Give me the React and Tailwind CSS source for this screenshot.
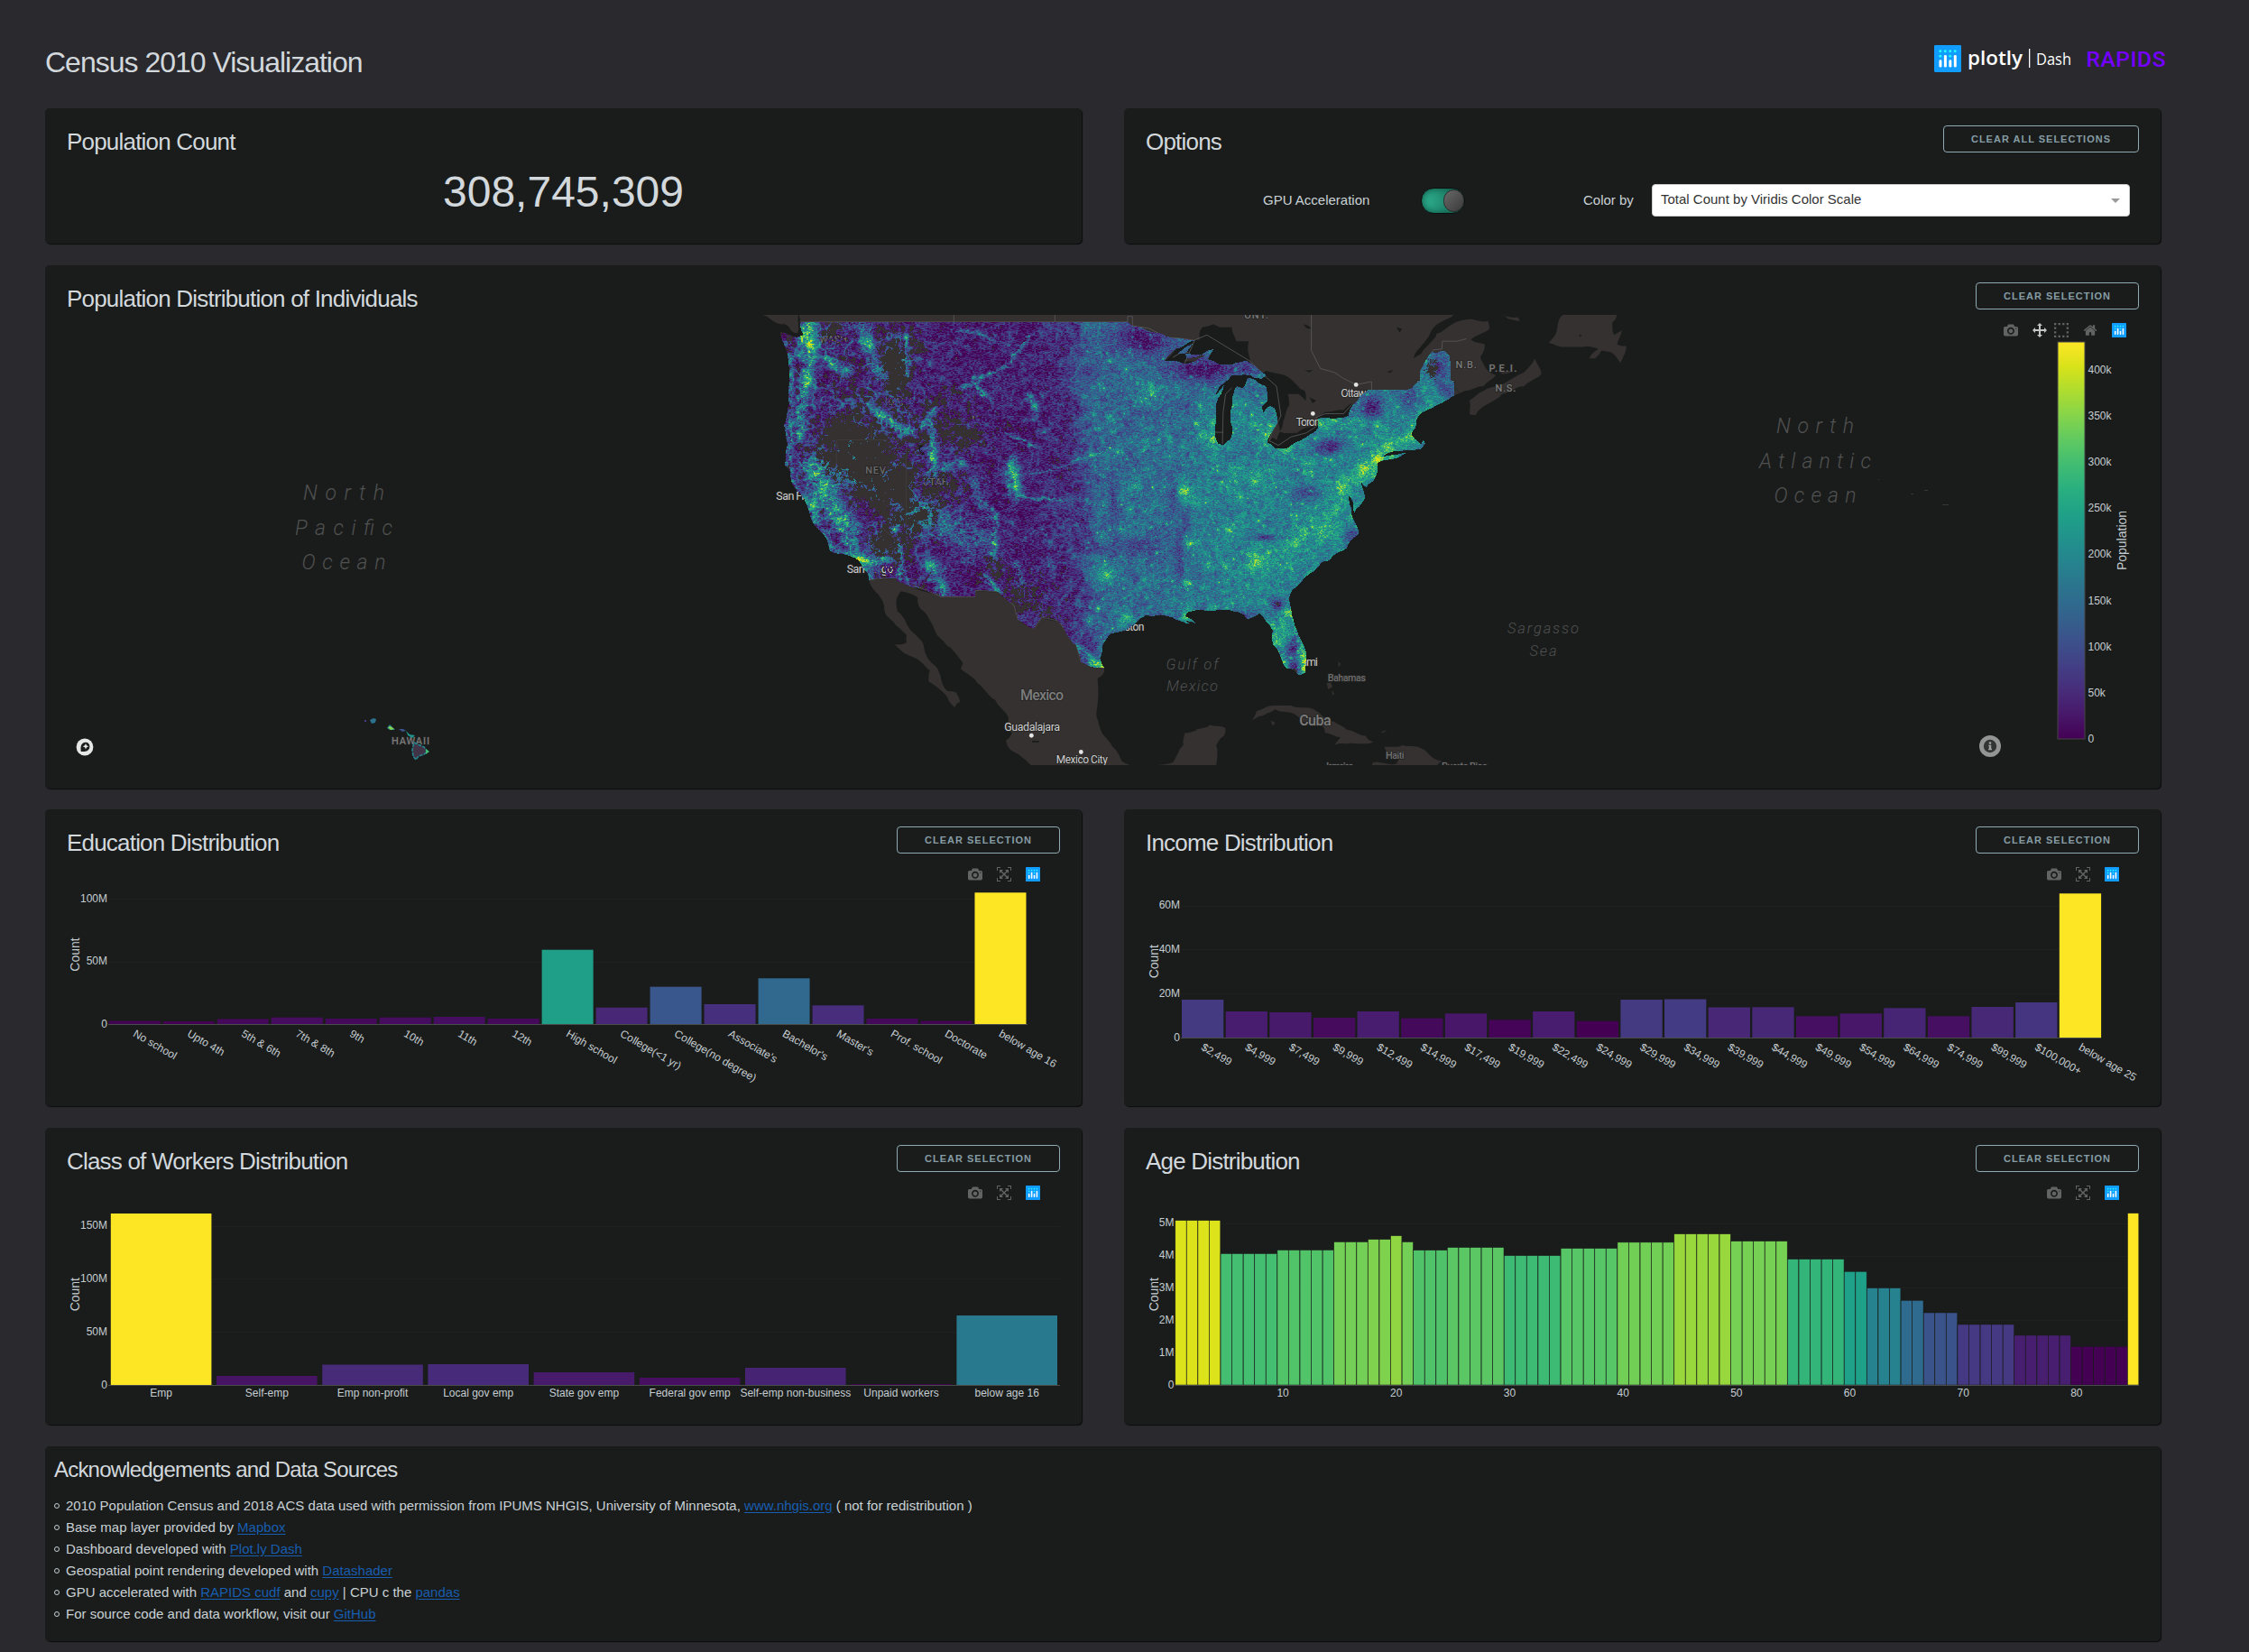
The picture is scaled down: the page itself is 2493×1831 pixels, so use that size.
import React, { useEffect, useRef } from "react";

const FONT = "'Liberation Sans', Arial, sans-serif";

/* ---------- colour scale ---------- */
const VIRIDIS = [
  [68, 1, 84], [72, 24, 106], [71, 45, 123], [66, 64, 134], [59, 82, 139], [51, 99, 141],
  [44, 114, 142], [38, 130, 142], [33, 145, 140], [31, 160, 136], [40, 174, 128], [63, 188, 115],
  [94, 201, 98], [132, 212, 75], [173, 220, 48], [216, 226, 25], [253, 231, 37],
];
function viridis(t) {
  const v = Math.max(0, Math.min(1, t)) * 16;
  const i = Math.min(15, Math.floor(v));
  const f = v - i;
  return [0, 1, 2].map((k) => Math.round(VIRIDIS[i][k] * (1 - f) + VIRIDIS[i + 1][k] * f));
}
const rgb = (c) => `rgb(${c[0]},${c[1]},${c[2]})`;

/* ---------- icons ---------- */
const CAMERA =
  "m500 450c-83 0-150-67-150-150 0-83 67-150 150-150 83 0 150 67 150 150 0 83-67 150-150 150z m400 150h-120c-16 0-34 13-39 29l-31 93c-6 15-23 28-40 28h-340c-16 0-34-13-39-28l-31-94c-6-15-23-28-40-28h-120c-55 0-100-45-100-100v-450c0-55 45-100 100-100h800c55 0 100 45 100 100v450c0 55-45 100-100 100z m-400-550c-138 0-250 112-250 250 0 138 112 250 250 250 138 0 250-112 250-250 0-138-112-250-250-250z m365 380c-19 0-35 16-35 35 0 19 16 35 35 35 19 0 35-16 35-35 0-19-16-35-35-35z";
const PAN =
  "m1000 350l-187 188 0-125-250 0 0 250 125 0-188 187-187-187 125 0 0-250-250 0 0 125-188-188 186-187 0 125 252 0 0-250-125 0 187-188 188 188-125 0 0 250 250 0 0-126 187 188z";
const SELECT =
  "m0 850l0-143 143 0 0 143-143 0z m286 0l0-143 143 0 0 143-143 0z m285 0l0-143 143 0 0 143-143 0z m286 0l0-143 143 0 0 143-143 0z m-857-286l0-143 143 0 0 143-143 0z m857 0l0-143 143 0 0 143-143 0z m-857-285l0-143 143 0 0 143-143 0z m857 0l0-143 143 0 0 143-143 0z m-857-286l0-143 143 0 0 143-143 0z m286 0l0-143 143 0 0 143-143 0z m285 0l0-143 143 0 0 143-143 0z m286 0l0-143 143 0 0 143-143 0z";
const AUTOSCALE =
  "m250 850l-187 0-63 0 0-62 0-188 63 0 0 188 187 0 0 62z m688 0l-188 0 0-62 188 0 0-188 62 0 0 188 0 62-62 0z m-875-938l0 188-63 0 0-188 0-62 63 0 187 0 0 62-187 0z m875 188l0-188-188 0 0-62 188 0 62 0 0 62 0 188-62 0z m-125 188l-1 0-93-94-156 156 156 156 92-93 2 0 0 250-250 0 0-2 93-92-156-156-156 156 94 92 0 2-250 0 0-250 0 0 93 93 157-156-157-156-93 94 0 0 0-250 250 0 0 0-94 93 156 157 156-157-93-93 0 0 250 0 0 250z";
const HOME =
  "m786 296v-267q0-15-11-26t-25-10h-214v214h-143v-214h-214q-15 0-25 10t-11 26v267q0 1 0 2t0 2l321 264 321-264q1-1 1-4z m124 39l-34-41q-5-5-12-6h-2q-7 0-12 3l-386 322-386-322q-7-4-13-4-7 2-12 7l-35 41q-4 5-3 13t6 12l401 334q18 15 42 15t43-15l136-114v109q0 8 5 13t13 5h107q8 0 13-5t5-13v-227l122-102q5-5 6-12t-4-13z";

function BarIcon({ d, className = "text-[#626463]", box = "0 0 1000 1000" }) {
  return (
    <svg viewBox={box} className={`h-4 w-4 ${className}`}>
      <path d={d} transform="matrix(1 0 0 -1 0 850)" fill="currentColor" />
    </svg>
  );
}

function PlotlyMark({ className }) {
  return (
    <svg viewBox="0 0 132 132" className={className}>
      <rect width="132" height="132" rx="5" fill="#119dff" />
      {[[30, 30], [30, 54], [54, 30], [78, 30], [78, 54], [102, 30]].map(([x, y]) => (
        <circle key={`${x}${y}`} cx={x} cy={y} r="6.5" fill="#25fefd" />
      ))}
      {[[24, 72], [48, 48], [72, 72], [96, 48]].map(([x, y]) => (
        <rect key={x} x={x} y={y} width="13" height={108 - y} rx="6" fill="#fff" />
      ))}
    </svg>
  );
}

/* ---------- shared pieces ---------- */
function Card({ className = "", children }) {
  return (
    <section className={`rounded-[5px] bg-[#1a1c1b] shadow-[1px_1px_1px_#0b0c0c] ${className}`}>{children}</section>
  );
}

function OutlineButton({ children }) {
  return (
    <button className="h-[30px] rounded-[4px] border border-[#8faab3] px-[30px] text-[11px] leading-[27px] font-bold tracking-[1px] whitespace-nowrap text-[#869ca5] uppercase">
      {children}
    </button>
  );
}

function CardHeader({ title, button }) {
  return (
    <header className="flex h-[56px] items-start justify-between pt-[19px] pr-6 pl-6">
      <h2 className="pt-[3px] text-[26px] leading-[30px] tracking-[-0.8px] text-[#d2d8dc]">{title}</h2>
      {button && <OutlineButton>{button}</OutlineButton>}
    </header>
  );
}

/* ---------- bar charts ---------- */
function BarChart({ bars, x0, pitch, barW, base, axis, ticks, unit, countX, countY, rotate, xTicks, tickX, edge }) {
  const tops = bars.map((b) => b[1]);
  const hi = Math.max(...tops);
  const lo = Math.min(...tops);
  return (
    <svg viewBox="0 84 1149 245" className="block h-[245px] w-[1149px]" fontFamily={FONT} fill="#c5cdd2">
      {ticks.map((t, i) => (
        <g key={t}>
          {i > 0 && <rect x={axis[0]} y={Math.round(base - i * unit)} width={axis[1] - axis[0]} height="1" fill="#1f2120" />}
          <text x={tickX} y={base - i * unit + 3.6} fontSize="12" textAnchor="end">{t}</text>
        </g>
      ))}
      {bars.map(([label, h], i) => (
        <g key={i}>
          <rect
            x={x0 + i * pitch}
            y={base - h}
            width={barW}
            height={h}
            fill={rgb(viridis((h - lo) / (hi - lo)))}
            stroke={edge ? "#1a1c1b" : "none"}
            strokeWidth={edge ? 0.5 : 0}
          />
          {label && (rotate ? (
            <text
              fontSize="12"
              transform={`translate(${x0 + i * pitch + barW / 2 - 2.5} ${base + 13}) rotate(30)`}
            >
              {label}
            </text>
          ) : (
            <text x={x0 + i * pitch + barW / 2} y={base + 12.6} fontSize="12" textAnchor="middle">{label}</text>
          ))}
        </g>
      ))}
      {xTicks && xTicks.map(([t, x]) => (
        <text key={t} x={x} y={base + 12.6} fontSize="12" textAnchor="middle">{t}</text>
      ))}
      <rect x={axis[0]} y={base} width={axis[1] - axis[0]} height="1" fill="#4a4c4b" />
      <text fontSize="14" textAnchor="middle" transform={`translate(${countX} ${countY}) rotate(-90)`}>Count</text>
    </svg>
  );
}

function ChartCard({ title, chart }) {
  return (
    <Card className="h-[329px] w-[1149px]">
      <CardHeader title={title} button="Clear Selection" />
      <div className="flex h-7 items-center justify-end gap-4 pt-[3px] pr-[46px]">
        <BarIcon d={CAMERA} />
        <BarIcon d={AUTOSCALE} />
        <PlotlyMark className="h-4 w-4" />
      </div>
      <BarChart {...chart} />
    </Card>
  );
}

const EDUCATION = {
  bars: [
    ["No school", 3.5], ["Upto 4th", 3], ["5th & 6th", 5.6], ["7th & 8th", 7.3], ["9th", 6], ["10th", 7.3],
    ["11th", 8], ["12th", 6], ["High school", 82.3], ["College(<1 yr)", 18.3], ["College(no degree)", 41.3],
    ["Associate's", 22], ["Bachelor's", 50.7], ["Master's", 20.7], ["Prof. school", 6], ["Doctorate", 3.5],
    ["below age 16", 145.7],
  ],
  x0: 70.8, pitch: 59.98, barW: 57, base: 238, axis: [70, 1089], ticks: ["0", "50M", "100M"], unit: 69.5,
  tickX: 69, countX: 38, countY: 161, rotate: true,
};

const INCOME = {
  bars: [
    ["$2,499", 42], ["$4,999", 29], ["$7,499", 28], ["$9,999", 22], ["$12,499", 29], ["$14,999", 21.4],
    ["$17,499", 26.7], ["$19,999", 19.6], ["$22,499", 29], ["$24,999", 18.3], ["$29,999", 42], ["$34,999", 42.5],
    ["$39,999", 33.5], ["$44,999", 33.7], ["$49,999", 23.7], ["$54,999", 26.7], ["$64,999", 32.7],
    ["$74,999", 23.7], ["$99,999", 34], ["$100,000+", 39], ["below age 25", 159.7],
  ],
  x0: 64, pitch: 48.64, barW: 46.3, base: 253, axis: [63, 1083], ticks: ["0", "20M", "40M", "60M"], unit: 48.8,
  tickX: 62, countX: 38, countY: 168.7, rotate: true,
};

const WORKERS = {
  bars: [
    ["Emp", 190], ["Self-emp", 10], ["Emp non-profit", 22.5], ["Local gov emp", 23], ["State gov emp", 14],
    ["Federal gov emp", 8], ["Self-emp non-business", 19], ["Unpaid workers", 0.8], ["below age 16", 77],
  ],
  x0: 72.8, pitch: 117.2, barW: 111.6, base: 285, axis: [70, 1125], ticks: ["0", "50M", "100M", "150M"],
  unit: 58.8, tickX: 69, countX: 38, countY: 184.7,
};

const AGE_GROUPS = [
  [4, 182.3], [5, 145.5], [5, 149.5], [3, 158.5], [2, 161.3], [1, 165.3], [1, 158.5], [3, 149.3], [5, 152.3], [5, 143.3],
  [5, 151.3], [5, 158.1], [5, 167.3], [5, 159.3], [5, 139.4], [2, 125.7], [3, 107.4], [2, 93.7], [3, 80],
  [5, 67], [5, 55], [5, 42.6], [1, 190.3],
];
const AGE = {
  bars: AGE_GROUPS.flatMap(([n, h]) => Array.from({ length: n }, () => ["", h])),
  x0: 56.8, pitch: 12.568, barW: 12.3, base: 285, axis: [57, 1125],
  ticks: ["0", "1M", "2M", "3M", "4M", "5M"], unit: 35.87, tickX: 55.5, countX: 38, countY: 184.7, edge: true,
  xTicks: [10, 20, 30, 40, 50, 60, 70, 80].map((t) => [t, 176.1 + (t - 10) * 12.568]),
};

/* ---------- map geometry ----------
   Coast lines are kept in two survey grids: "w" for the west, "e" for the east. */
const wx = (x) => 746 + x / 3;
const ex = (x) => 1226 + x * 0.3444;
const gy = (y) => y * 0.3444 - 19;
function pts(src) {
  let mode = "w";
  const out = [];
  src.trim().split(/\s+/).forEach((tok) => {
    if (tok === "w" || tok === "e") mode = tok;
    else {
      const [x, y] = tok.split(",").map(Number);
      out.push([mode === "w" ? wx(x) : ex(x), gy(y)]);
    }
  });
  return out;
}
/* Adds small deterministic wiggles so that shores look natural. */
function rough(list, amp = 1.3) {
  const out = [];
  list.forEach((p, i) => {
    const q = list[(i + 1) % list.length];
    const d = Math.hypot(q[0] - p[0], q[1] - p[1]);
    out.push(p);
    if (p[1] === q[1] || d > 150) return;
    const n = Math.floor(d / 4);
    for (let k = 1; k < n; k++) {
      const t = k / n;
      const s = Math.sin(i * 91.7 + k * 37.3) * amp;
      out.push([p[0] + (q[0] - p[0]) * t + (s * (q[1] - p[1])) / d, p[1] + (q[1] - p[1]) * t - (s * (q[0] - p[0])) / d]);
    }
  });
  return out;
}
const toPath = (list) => "M" + list.map((p) => `${p[0].toFixed(1)},${p[1].toFixed(1)}`).join("L") + "Z";
const shape = (src, amp) => toPath(rough(pts(src), amp));
const line = (src) => "M" + pts(src).map((p) => `${p[0].toFixed(1)},${p[1].toFixed(1)}`).join("L");

const USA = `200,78 1290,78 1310,92 1340,98 1380,112 1420,125 1460,130 1500,137 1520,138 1490,145 1450,165 1412,205
 1440,203 1480,212 1515,203 1548,188 e 15,180 60,150 75,138 40,180 45,195 90,185 118,168 132,166 112,198 150,215 190,215 240,205 268,222
 300,250 285,262 262,258 250,248 215,250 190,248 165,275 150,285 130,318 150,300 165,280 155,310 138,350 135,440 146,470 165,474 185,455
 193,420 185,370 192,320 205,285 225,292 240,260 265,265 300,285 306,330 286,352 292,370 312,348 328,356 338,400 318,435
 303,465 330,485 368,485 410,460 468,420 466,390 530,388 565,380 580,345 605,315 628,298 750,298 770,290 795,268 797,235
 815,200 835,175 850,178 875,170 892,188 893,262 905,272 905,290 922,308 890,325 850,345 800,372 783,395 780,420 768,440
 780,455 800,472 806,458 812,470 798,486 760,490 700,497 670,515 740,500 752,498 710,518 660,530 658,560 645,590 622,610
 604,588 612,615 620,640 600,672 584,692 582,660 566,635 565,600 567,650 576,680 576,700 588,725 600,755 575,780 560,805
 530,820 505,845 480,850 455,880 420,905 385,940 375,975 382,1020 400,1070 425,1130 430,1160 428,1205 408,1215 385,1195
 365,1192 345,1150 322,1115 322,1070 300,1040 280,1015 240,1035 215,1012 180,1003 130,1008 80,1003 50,1010 40,1025
 75,1048 40,1040 w 1500,1050 1450,1035 1400,1020 1350,1022 1320,1045 1280,1070 1235,1080 1205,1120 1198,1160 1212,1192
 1170,1188 1135,1172 1120,1120 1085,1080 1060,1040 1040,1030 1005,1028 978,1065 925,1035 912,990 860,945 782,942
 782,962 670,962 523,910 520,902 430,908 425,885 395,845 345,825 300,815 285,770 245,725 220,660 175,600 170,560
 150,540 160,470 147,410 165,340 165,250 155,170 135,110 190,128 212,120`;

const CANADA = `197,55 1500,55 e 905,55 860,80 830,110 780,180 775,195 800,180 850,115 900,85 960,68 1015,75 1020,100 960,135
 1005,150 990,190 1020,240 1040,250 1000,285 940,300 922,308 905,290 893,262 750,298 628,300 580,345 540,372 470,386 468,425
 330,485 303,465 338,400 300,250 110,205 w 1412,205 1290,78 215,78 200,100`;

const LAND = [
  "75,55 195,55 192,115 170,105 150,85 110,75",
  `430,908 520,900 523,910 670,962 782,962 782,942 860,945 912,990 925,1035 978,1065 1005,1028 1060,1040 1120,1120
  1135,1172 1212,1192 1205,1215 1190,1225 1187,1350 1200,1390 1240,1445 1270,1490 1310,1505 970,1505 940,1480 900,1455
  885,1425 905,1400 888,1385 893,1350 850,1295 790,1240 735,1195 742,1175 690,1120 665,1095 630,1035 600,1000 592,965
  560,950 535,945 523,965 525,1010 555,1050 580,1080 605,1105 620,1150 650,1185 670,1230 690,1265 720,1270 733,1300
  715,1318 690,1285 628,1235 632,1200 600,1170 560,1150 515,1115 555,1110 555,1085 520,1055 490,1025 480,990 450,945`,
  "1350,1505 1440,1495 1475,1440 1480,1400 1540,1385 e 70,1390 120,1375 170,1385 165,1410 140,1440 140,1505",
  "e 255,1360 270,1330 320,1312 380,1312 440,1320 480,1345 520,1365 560,1390 620,1410 645,1430 560,1435 520,1440 540,1415 490,1400 480,1375 420,1365 380,1335 330,1325 290,1345",
  "e 680,1445 740,1440 800,1450 830,1475 865,1490 850,1505 640,1505 645,1495 720,1500 730,1480 690,1475",
  "e 1210,145 1235,110 1240,80 1255,55 1430,55 1415,80 1420,120 1445,105 1430,150 1460,155 1440,210 1410,175 1380,170 1360,195 1340,195 1370,165 1320,158 1250,158",
  "e 955,375 955,330 1000,300 1050,280 1110,250 1130,240 1165,195 1187,245 1130,285 1060,310 1000,350 975,378",
  "e 1050,55 1110,62 1118,74 1080,68", "e 1020,225 1060,235 1095,238 1060,245",
  "e 495,1240 508,1238 515,1252 500,1260", "e 512,1262 520,1275 514,1280", "e 315,1360 330,1368 322,1378",
  "e 670,1398 690,1390 678,1400", "e 532,1170 540,1178 534,1190",
];
const WATER = [
  `1412,205 1450,165 1500,138 1530,135 e 85,120 95,95 130,85 150,95 190,95 205,140 245,140 242,170 250,215 268,222 240,205
  190,215 150,215 112,198 132,166 90,185 45,195 30,215`,
  "e 262,258 300,235 370,255 400,282 425,300 428,332 405,310 370,310 375,345 355,400 345,430 338,400 328,356 292,370 306,330 300,285",
  "e 150,285 190,245 245,250 240,262 205,285 190,320 185,370 193,420 185,455 165,474 146,470 135,440 138,350",
  "e 303,468 322,450 335,458 345,432 400,435 430,418 470,408 465,430 410,460 365,485 330,485",
  "e 462,385 490,368 550,362 575,340 578,372 530,388 475,390",
  "592,475 610,475 630,505 632,520 612,515",
  "e 420,85 435,90 450,100 430,98", "e 720,95 738,100 730,112", "e 425,233 450,232 440,240", "e 690,238 710,232 700,242",
  "e 440,320 462,330 450,340", "e 1308,118 1316,122 1310,128", "972,1426 995,1426 995,1431 972,1431",
];
const BORDERS = [
  "200,78 1290,78", "712,55 712,78", "1048,55 1048,78", "1290,78 1290,60 1306,60 1306,90 1360,98 1420,128 1460,130 1510,137 e 110,120 250,205 300,255 334,285 348,380 320,435 310,460 340,475 380,448 430,435 465,412 462,385 490,373 550,373 575,345",
  "e 446,55 446,170 475,228 520,240 550,260 590,280 640,270 640,298", "e 797,262 797,235 838,168 866,165 868,140 915,140 945,132",
  "e 38,212 70,138", "e 0,192 28,176 50,176", "e 190,290 170,310 162,370 160,470", "e 135,433 163,433",
  "430,908 520,900 670,962 782,962 782,942 860,945 912,990 925,1035 978,1065 1005,1028 1060,1040 1120,1120 1135,1172 1212,1192",
  "322,457 550,457", "322,457 322,605 530,790", "553,457 553,740", "438,370 438,457", "748,510 748,640",
];

/* x, y, peak, radius */
const CITIES_W = [
  [232, 150, 0.6, 20], [228, 95, 0.4, 16], [218, 272, 0.55, 16], [430, 150, 0.4, 14], [455, 370, 0.35, 12], [240, 665, 0.55, 20],
  [270, 620, 0.42, 16], [330, 715, 0.4, 14], [400, 842, 0.7, 26], [432, 895, 0.5, 14], [512, 742, 0.75, 9],
  [636, 862, 0.7, 16], [678, 925, 0.45, 12], [640, 520, 0.6, 11], [908, 565, 0.6, 18], [915, 610, 0.4, 12],
  [850, 790, 0.5, 9], [850, 940, 0.5, 9], [1365, 300, 0.44, 22], [1257, 495, 0.36, 10], [1312, 603, 0.38, 16], [1480, 622, 0.38, 18],
  [1220, 890, 0.46, 20], [1280, 1028, 0.46, 19], [1160, 1040, 0.4, 13], [1190, 1000, 0.35, 11], [1200, 772, 0.36, 11],
  [1262, 742, 0.32, 10], [1207, 668, 0.3, 9], [1495, 790, 0.36, 12], [1488, 1022, 0.38, 12], [1180, 1182, 0.42, 14],
  [1030, 860, 0.32, 10], [1030, 785, 0.28, 9], [1350, 475, 0.32, 9], [550, 425, 0.3, 12], [975, 350, 0.35, 8],
  [1072, 200, 0.36, 8], [545, 120, 0.38, 9], [1485, 915, 0.25, 10], [330, 580, 0.38, 10], [198, 435, 0.35, 10], [1530, 440, 0.26, 9],
  [1430, 460, 0.26, 7], [1510, 520, 0.26, 8], [1228, 200, 0.34, 7], [300, 215, 0.35, 11], [350, 230, 0.3, 9], [632, 210, 0.3, 7], [668, 262, 0.3, 7],
  [1470, 480, 0.24, 7], [1243, 432, 0.24, 6], [1230, 378, 0.24, 6], [1052, 122, 0.26, 6], [1345, 910, 0.24, 8], [1365, 692, 0.24, 8], [1515, 400, 0.26, 9],
];
const CITIES_E = [
  [130, 455, 0.46, 20], [128, 405, 0.3, 10], [310, 435, 0.42, 16], [365, 490, 0.36, 14], [430, 535, 0.34, 12],
  [658, 520, 0.5, 14], [612, 555, 0.34, 18], [540, 608, 0.4, 14], [768, 438, 0.38, 15], [690, 480, 0.26, 13], [262, 590, 0.34, 14], [270, 570, 0.26, 10],
  [197, 565, 0.34, 13], [215, 642, 0.32, 10], [38, 622, 0.36, 15], [265, 848, 0.4, 20], [398, 785, 0.3, 15],
  [175, 742, 0.34, 12], [55, 790, 0.34, 11], [475, 755, 0.28, 13], [422, 745, 0.26, 11], [525, 678, 0.32, 11], [572, 708, 0.34, 10],
  [365, 1008, 0.34, 11], [378, 1080, 0.34, 13], [330, 1108, 0.4, 11], [422, 1170, 0.6, 12], [420, 1195, 0.5, 10],
  [435, 890, 0.3, 9], [320, 555, 0.28, 10], [520, 395, 0.3, 9], [474, 405, 0.34, 9], [600, 395, 0.26, 9], [172, 865, 0.3, 10],
  [40, 915, 0.26, 9], [45, 1022, 0.4, 10], [125, 998, 0.26, 8], [260, 410, 0.28, 8], [72, 400, 0.26, 8], [660, 410, 0.26, 9], [362, 1185, 0.3, 9],
];
const CITIES = [
  ...CITIES_W.map(([x, y, a, r]) => [wx(x), gy(y), a, r / 3]),
  ...CITIES_E.map(([x, y, a, r]) => [ex(x), gy(y), a, r / 3]),
];
/* thinly settled ground: x, y, rx, ry, strength */
const EMPTY = [
  ...[[400, 520, 110, 110, 1], [500, 600, 90, 90, 0.8], [510, 220, 45, 80, 0.9], [720, 440, 110, 70, 0.75], [350, 420, 70, 50, 0.7],
    [600, 700, 100, 70, 0.7], [480, 790, 50, 60, 0.8], [850, 860, 40, 50, 0.7], [930, 960, 70, 60, 0.7], [480, 400, 60, 80, 0.5],
    [580, 150, 30, 50, 0.7], [400, 350, 60, 40, 0.5], [690, 600, 90, 60, 0.6], [700, 310, 60, 40, 0.5],
    [1000, 1010, 50, 40, 0.6], [600, 960, 80, 20, 0.5], [740, 330, 60, 50, 0.4], [290, 110, 40, 30, 0.3],
    [1340, 110, 60, 22, 1.2]].map(([x, y, a, b, s]) => [wx(x), gy(y), a / 3, b / 3, s]),
  ...[[832, 225, 32, 48, 1.9], [640, 355, 22, 26, 1.3], [390, 1200, 18, 16, 1.8], [335, 985, 14, 12, 1.5]].map(([x, y, a, b, s]) => [ex(x), gy(y), a / 3, b / 3, s]),
];
const LOW = [
  ...[[1340, 130, 90, 45, 0.28], [1320, 800, 90, 28, 0.12], [1240, 650, 14, 70, 0.15], [1460, 840, 16, 120, 0.14], [1140, 1110, 40, 50, 0.2], [1130, 1150, 30, 40, 0.2], [1480, 340, 30, 20, 0.12],
    [1540, 230, 70, 50, 0.12]].map(([x, y, a, b, s]) => [wx(x), gy(y), a / 3, b / 3, s]),
  ...[[640, 350, 36, 42, 0.35], [505, 480, 50, 26, 0.26], [430, 625, 42, 26, 0.2], [100, 225, 120, 40, 0.2], [270, 310, 40, 40, 0.12],
    [385, 1120, 22, 46, 0.3], [760, 320, 30, 36, 0.24], [230, 1025, 40, 22, 0.2], [335, 985, 22, 18, 0.3], [855, 220, 34, 60, 0.25],
    [290, 770, 40, 10, 0.25], [575, 765, 22, 20, 0.3], [395, 1190, 22, 18, 0.3], [885, 300, 25, 20, 0.25], [230, 230, 60, 25, 0.2], [0, 640, 15, 60, 0.15], [40, 740, 15, 50, 0.12]].map(([x, y, a, b, s]) => [ex(x), gy(y), a / 3, b / 3, s]),
];
/* settled corridors: x1, y1, x2, y2, width, gain */
const ROADS = [
  [225, 85, 235, 190, 22, 0.42], [235, 180, 205, 350, 20, 0.34], [205, 350, 198, 450, 18, 0.28], [235, 530, 370, 760, 34, 0.32], [220, 650, 300, 810, 14, 0.3],
  [905, 520, 920, 640, 15, 0.32], [635, 400, 645, 560, 11, 0.32], [645, 350, 605, 420, 9, 0.3], [430, 340, 480, 390, 12, 0.25],
  [320, 820, 440, 850, 14, 0.32], [435, 850, 500, 840, 12, 0.2], [632, 860, 690, 960, 14, 0.22], [850, 700, 845, 830, 9, 0.3], [550, 130, 553, 250, 7, 0.32],
  [500, 400, 570, 430, 12, 0.3], [290, 200, 360, 230, 18, 0.25], [400, 80, 430, 160, 22, 0.26], [430, 160, 470, 260, 22, 0.2], [165, 180, 170, 560, 10, 0.24],
  [170, 580, 300, 815, 9, 0.26], [620, 700, 790, 780, 50, 0.2], [780, 600, 830, 700, 24, 0.15], [1115, 1120, 1210, 1190, 12, 0.32],
  [960, 570, 1200, 500, 5, 0.16], [920, 640, 1070, 655, 4, 0.28], [890, 430, 1000, 480, 5, 0.25], [960, 120, 900, 210, 5, 0.28], [740, 290, 880, 220, 6, 0.25],
  [780, 260, 840, 340, 6, 0.25], [720, 100, 850, 130, 5, 0.18], [820, 890, 860, 945, 8, 0.34], [535, 790, 540, 900, 7, 0.24], [560, 700, 620, 650, 6, 0.2],
  [690, 540, 740, 540, 14, 0.25], [960, 320, 985, 355, 12, 0.25], [920, 860, 940, 920, 7, 0.2], [280, 530, 370, 590, 20, 0.2], [145, 400, 165, 520, 9, 0.2],
].map(([a, b, c, d, w, g]) => [wx(a), gy(b), wx(c), gy(d), w / 3, g]).concat(
  [[768, 438, 658, 520, 30, 0.1], [658, 520, 540, 608, 28, 0.14], [540, 608, 500, 720, 34, 0.05], [500, 740, 265, 848, 44, 0.06], [385, 1000, 428, 1190, 8, 0.22],
    [328, 1060, 350, 1160, 9, 0.15], [365, 1020, 340, 1110, 16, 0.1], [768, 430, 830, 350, 24, 0.08], [470, 400, 640, 400, 16, 0.05], [660, 400, 660, 510, 14, 0.07]].map(([a, b, c, d, w, g]) => [ex(a), gy(b), ex(c), gy(d), w / 3, g])
);

const hash = (x, y, s = 0) => {
  let h = (x * 374761393 + y * 668265263 + s * 982451653) | 0;
  h = Math.imul(h ^ (h >>> 13), 1274126177);
  h ^= h >>> 16;
  return (h >>> 0) / 4294967296;
};
function noise(x, y, s) {
  const xi = Math.floor(x), yi = Math.floor(y);
  const u = x - xi, v = y - yi;
  const a = u * u * (3 - 2 * u), b = v * v * (3 - 2 * v);
  return (
    (hash(xi, yi, s) * (1 - a) + hash(xi + 1, yi, s) * a) * (1 - b) +
    (hash(xi, yi + 1, s) * (1 - a) + hash(xi + 1, yi + 1, s) * a) * b
  );
}
const fbm = (x, y, s) => 0.5 * noise(x, y, s) + 0.3 * noise(x * 2.1, y * 2.1, s + 1) + 0.2 * noise(x * 4.3, y * 4.3, s + 2);
const ridge = (x, y, s) => 1 - Math.abs(2 * fbm(x, y, s) - 1);
const step = (a, b, x) => {
  const t = Math.max(0, Math.min(1, (x - a) / (b - a)));
  return t * t * (3 - 2 * t);
};

const CX = 786, CY = 4, CW = 752, CH = 410;

function drawDensity(canvas) {
  const ctx = canvas.getContext("2d", { willReadFrequently: true });
  ctx.clearRect(0, 0, CW, CH);
  ctx.save();
  ctx.translate(-CX, -CY);
  ctx.fillStyle = "#fff";
  ctx.fill(new Path2D(shape(USA, 0.9)));
  ctx.restore();
  const img = ctx.getImageData(0, 0, CW, CH);
  const d = img.data;

  const boost = new Float32Array(CW * CH);
  CITIES.forEach(([x, y, a, r]) => {
    const R = Math.ceil(r * 3);
    for (let j = -R; j <= R; j++) for (let i = -R; i <= R; i++) {
      const px = Math.round(x - CX) + i, py = Math.round(y - CY) + j;
      if (px < 0 || py < 0 || px >= CW || py >= CH) continue;
      const ang = Math.atan2(j, i);
      const rr = r * (0.7 + 0.4 * Math.abs(Math.cos(ang * 3 + x)));
      boost[py * CW + px] += a * Math.exp(-Math.hypot(i, j) / rr);
    }
  });
  /* small towns */
  for (let k = 0; k < 2200; k++) {
    const x = hash(k, 7, 1) * CW, y = hash(k, 9, 2) * CH;
    const a = 0.12 + 0.28 * hash(k, 3, 3) ** 2, r = 0.9 + 1 * hash(k, 4, 4);
    for (let j = -4; j <= 4; j++) for (let i = -4; i <= 4; i++) {
      const px = Math.round(x) + i, py = Math.round(y) + j;
      if (px < 0 || py < 0 || px >= CW || py >= CH) continue;
      boost[py * CW + px] += a * (x > 340 ? 1 : 0.55) * Math.exp(-(i * i + j * j) / (r * r));
    }
  }

  for (let py = 0; py < CH; py++) for (let px = 0; px < CW; px++) {
    const o = (py * CW + px) * 4;
    if (d[o + 3] < 110) { d[o + 3] = 0; continue; }
    const X = px + CX, Y = py + CY;
    const n = fbm(X / 16, Y / 16, 11);
    const n2 = fbm(X / 4.5, Y / 4.5, 31);
    const speck = hash(px, py, 5);
    const streak = hash(px >> 1, py, 6);
    const rg = Math.max(ridge(X / 22, Y / 22, 51), ridge(X / 13, Y / 13, 71) * 0.98);
    const vein = Math.pow(rg, 24);
    const east = step(1112, 1152, X + (n - 0.5) * 36 + step(190, 40, Y) * 8);
    const plains = step(935, 985, X + (n - 0.5) * 50 + step(160, 60, Y) * 20);
    const far = step(1180, 1330, X);

    let road = 0;
    for (let k = 0; k < ROADS.length; k++) {
      const [ax, ay, bx, by, w, g] = ROADS[k];
      const dx = bx - ax, dy = by - ay;
      const wob = (n2 - 0.5) * 12;
      const qx = X + wob, qy = Y + (n - 0.5) * 10;
      const t = Math.max(0, Math.min(1, ((qx - ax) * dx + (qy - ay) * dy) / (dx * dx + dy * dy)));
      const ds = Math.hypot(qx - ax - dx * t, qy - ay - dy * t) / w;
      if (ds < 2.6) road = Math.max(road, g * Math.exp(-ds * ds * 0.8));
    }
    let empty = 0;
    for (let k = 0; k < EMPTY.length; k++) {
      const e = EMPTY[k];
      const q = ((X - e[0]) / e[2]) ** 2 + ((Y - e[1]) / e[3]) ** 2;
      if (q < 5) empty = Math.max(empty, e[4] * Math.exp(-q * 0.7));
    }
    let low = 0;
    for (let k = 0; k < LOW.length; k++) {
      const e = LOW[k];
      const q = ((X - e[0]) / e[2]) ** 2 + ((Y - e[1]) / e[3]) ** 2;
      if (q < 6) low += e[4] * Math.exp(-q * 0.9) * (0.1 + 1.9 * n2);
    }
    const b = boost[py * CW + px];
    const eastV = 0.315 + 0.105 * far + 0.12 * (n - 0.5) + 0.26 * (n2 - 0.5) + 0.2 * (streak - 0.5) + 0.12 * (speck - 0.5) + vein * 0.08 - low;
    const plainV = 0.045 + 0.09 * step(1050, 1150, X) + 0.14 * (n - 0.42) + 0.22 * (n2 - 0.5) + 0.2 * (streak - 0.5) + vein * 0.14;
    const westV = 0.02 + 0.3 * (n2 - 0.5) + 0.16 * (streak - 0.4) + vein * 0.34;
    let v = westV * (1 - plains) + plainV * plains;
    v = v * (1 - east) + eastV * east + b * (0.55 + 0.6 * speck) + road * (0.4 + 1.3 * n2) * (0.65 + 0.6 * streak);

    let cover = 0.55 * (n - 0.5) + 1.1 * (n2 - 0.5) + 0.09 + vein * 0.5 + road * 1.6 + b * 1.6 - empty * 0.75;
    cover += plains * 0.27 + east * 0.9 - low * 0.9;
    if (cover + (speck - 0.5) * 0.3 < 0) { d[o + 3] = 0; continue; }
    const c = viridis(Math.max(0.0, Math.min(0.93, v)));
    d[o] = c[0]; d[o + 1] = c[1]; d[o + 2] = c[2];
    d[o + 3] = 255;
  }
  ctx.putImageData(img, 0, 0);
}

function MapText({ x, y, w, size, fill = "#6f6f6f", italic, weight = 400, halo = true, children }) {
  return (
    <text
      x={x} y={y + size * 0.355} fontSize={size} textAnchor="middle" textLength={w} fill={fill}
      fontStyle={italic ? "italic" : "normal"} fontWeight={weight}
      stroke={halo ? "#242423" : "none"} strokeWidth={halo ? 1.6 : 0} paintOrder="stroke"
    >
      {children}
    </text>
  );
}
/* label spans: grid, x1, x2, y, size, text, fill, weight */
const LABELS = [
  ["w", 265, 365, 133, 11, "WASH.", "#6a6a6a", 500], ["w", 640, 790, 188, 11, "MONT.", "#6a6a6a", 500],
  ["w", 483, 583, 333, 11, "IDAHO", "#6a6a6a", 500], ["w", 275, 350, 353, 11, "ORE.", "#6a6a6a", 500],
  ["w", 768, 850, 378, 11, "WYO.", "#6a6a6a", 500], ["w", 418, 493, 555, 11, "NEV.", "#6a6a6a", 500],
  ["w", 608, 695, 594, 11, "UTAH", "#6a6a6a", 500], ["w", 280, 388, 698, 11, "CALIF.", "#6a6a6a", 500],
  ["w", 615, 700, 833, 11, "ARIZ.", "#6a6a6a", 500], ["w", 838, 895, 826, 11, "N.M.", "#6a6a6a", 500],
  ["e", 785, 907, 278, 11, "MAINE", "#6a6a6a", 500], ["e", 230, 308, 54, 11, "ONT.", "#7a7a7a", 500],
  ["e", 910, 978, 214, 11, "N.B.", "#7a7a7a", 500], ["e", 1018, 1107, 226, 11, "P.E.I.", "#7a7a7a", 500],
  ["e", 1038, 1104, 292, 11, "N.S.", "#7a7a7a", 500], ["w", 121, 335, 637, 12.5, "San Francisco", "#cfcfcf"],
  ["w", 356, 511, 872, 12.5, "San Diego", "#cfcfcf"], ["w", 1220, 1345, 1059, 12, "Houston", "#cfcfcf"],
  ["w", 880, 1065, 1382, 12.5, "Guadalajara", "#cfcfcf"], ["w", 1052, 1224, 1485, 12, "Mexico City", "#cfcfcf"],
  ["e", 541, 640, 306, 12.5, "Ottawa", "#cfcfcf"], ["e", 396, 500, 400, 12.5, "Toronto", "#cfcfcf"],
  ["e", 380, 467, 1172, 12.5, "Miami", "#cfcfcf"], ["w", 933, 1077, 1278, 16, "Mexico", "#7c7c7c", 500],
  ["e", 407, 510, 1360, 16, "Cuba", "#7c7c7c", 500], ["e", 499, 621, 1224, 11, "Bahamas", "#6f6f6f", 500],
  ["e", 685, 745, 1471, 11, "Haiti", "#6f6f6f", 500], ["e", 865, 1013, 1508, 11, "Puerto Rico", "#6f6f6f", 500],
  ["e", 485, 582, 1508, 11, "Jamaica", "#6f6f6f", 500],
];
const SEAS = [
  [307, 196.5, 90, 23, "North"], [307, 235.5, 108, 23, "Pacific"], [307, 274, 93, 23, "Ocean"],
  [1938, 122.5, 86, 23, "North"], [1938, 161.5, 124, 23, "Atlantic"], [1938, 200, 91, 23, "Ocean"],
  [1636.5, 347.5, 79, 16.5, "Sargasso"], [1636.5, 372, 30, 16.5, "Sea"],
  [1247.5, 387, 58, 16.5, "Gulf of"], [1247.5, 411.5, 57, 16.5, "Mexico"],
];

function DensityMap() {
  const ref = useRef(null);
  useEffect(() => { drawDensity(ref.current); }, []);
  return (
    <div className="relative h-[499px] w-[2154px] shrink-0 overflow-hidden">
      <svg viewBox="0 0 2154 499" className="block h-[499px] w-[2154px]" fontFamily="Roboto, sans-serif">
        <path d={shape(CANADA, 1.2)} fill="#343130" />
        {LAND.map((l, i) => <path key={i} d={shape(l, 1.2)} fill="#343130" />)}
        <path d={shape(USA, 0.9)} fill="#343130" />
        {WATER.map((l, i) => <path key={i} d={shape(l, 0.9)} fill="#1a1c1b" />)}
        {BORDERS.map((l, i) => (
          <path key={i} d={line(l)} fill="none" stroke={i < 11 ? "#5c5b5a" : "#413f3e"} strokeWidth="0.8" />
        ))}
        {[[2044, 198, 3], [2059, 194, 4], [2079, 210, 7], [2008, 182, 1]].map(([x, y, w]) => <rect key={x} x={x} y={y} width={w} height="1" fill="#383635" />)}
        {SEAS.map(([x, y, w, s, t], i) => (
          <MapText key={i} x={x} y={y} w={w} size={s} fill="#505151" italic weight={300} halo={false}>{t}</MapText>
        ))}
        {LABELS.map(([g, a, b, y, s, t, f, wt]) => {
          const fx = g === "w" ? wx : ex;
          return (
            <MapText key={t} x={(fx(a) + fx(b)) / 2} y={gy(y)} w={fx(b) - fx(a)} size={s} fill={f} weight={wt}>{t}</MapText>
          );
        })}
        {[["w", 970, 1409], ["w", 1135, 1462], ["e", 590, 280], ["e", 451, 373]].map(([g, x, y]) => (
          <circle key={x} cx={(g === "w" ? wx : ex)(x)} cy={gy(y)} r="2.4" fill="#e4e4e4" />
        ))}
        <MapText x={381} y={472.5} w={42} size={11} fill="#7a7a7a" weight={500}>HAWAII</MapText>
        <path d="M336 449l4-2 3 1-1 4-4 1z" fill="#2c728e" />
        <rect x="330" y="449" width="2" height="2" fill="#424086" />
        <path d="M355 458l3-4 3 3 3 3-6 0z" fill="#26828e" />
        <path d="M356 457l3-1 4 3-4 1z" fill="#84d44b" />
        <path d="M368 459l5 0 3 2-4 1z" fill="#3b528b" />
        <path d="M376 461l4 4 6 1-3 3-5-3z" fill="#21918c" />
        <path d="M385 474l4 2 7 3 4 5-4 3-6 2-3 4-3-4-1-7z" fill="#413447" stroke="#26828e" strokeWidth="1.6" strokeDasharray="4 1" />
        <path d="M398 481l4 3-4 3z" fill="#3fbc73" />
      </svg>
      <canvas ref={ref} width={CW} height={CH} className="absolute top-[4px] left-[786px]" />
      <svg viewBox="0 0 20 20" className="absolute top-[469px] left-[10px] h-5 w-5">
        <circle cx="10" cy="10" r="9.4" fill="#e6e6e6" />
        <path d="M5.8 15c-1-6 .6-10.2 5.2-10.2 2.6 0 4.4 2 4.4 4.6 0 4.4-4.4 6.2-9.6 5.6z" fill="#1a1c1b" />
        <path d="M11 6l1 2.3 2.3 1-2.3 1-1 2.3-1-2.3-2.3-1 2.3-1z" fill="#e6e6e6" />
      </svg>
      <svg viewBox="0 0 24 24" className="absolute top-[466px] left-[2120px] h-6 w-6">
        <circle cx="12" cy="12" r="12" fill="#949494" />
        <circle cx="12" cy="12" r="7.2" fill="#333434" />
        <circle cx="12" cy="8.6" r="1.3" fill="#a0a0a0" />
        <path d="M10.3 10.8h2.900v4h.8v1.500h-3.900v-1.500h.8v-2.600h-.6z" fill="#a0a0a0" />
      </svg>
    </div>
  );
}

function ColorBar() {
  return (
    <svg viewBox="2178 82 167 471" className="block h-[471px] w-[167px]" fontFamily={FONT} fill="#c5cdd2">
      <defs>
        <linearGradient id="scale" x1="0" y1="1" x2="0" y2="0">
          {VIRIDIS.map((c, i) => <stop key={i} offset={i / 16} stopColor={rgb(c)} />)}
        </linearGradient>
      </defs>
      <rect x="2231" y="85" width="30" height="440" fill="url(#scale)" stroke="#444" strokeWidth="1" />
      {["0", "50k", "100k", "150k", "200k", "250k", "300k", "350k", "400k"].map((t, i) => (
        <text key={t} x="2264.5" y={529 - i * 51.15} fontSize="12">{t}</text>
      ))}
      <text fontSize="14" textAnchor="middle" transform="translate(2307 305) rotate(-90)">Population</text>
    </svg>
  );
}

/* ---------- acknowledgements ---------- */
const A = ({ children }) => <a href="#" className="text-[#175db0] underline underline-offset-[2px]">{children}</a>;
const NOTES = [
  <>2010 Population Census and 2018 ACS data used with permission from IPUMS NHGIS, University of Minnesota, <A>www.nhgis.org</A> ( not for redistribution )</>,
  <>Base map layer provided by <A>Mapbox</A></>,
  <>Dashboard developed with <A>Plot.ly Dash</A></>,
  <>Geospatial point rendering developed with <A>Datashader</A></>,
  <>GPU accelerated with <A>RAPIDS cudf</A> and <A>cupy</A> | CPU c the <A>pandas</A></>,
  <>For source code and data workflow, visit our <A>GitHub</A></>,
];

export default function App() {
  return (
    <div className="min-h-[1831px] w-full overflow-hidden bg-[#2a292e] pl-[50px] font-['Liberation_Sans',Arial,sans-serif] text-[15px] text-[#c9d1d5]">
      <div className="flex w-[2352px] flex-col">
        <header className="flex h-[120px] items-start justify-between pt-[50px]">
          <h1 className="pt-px text-[32px] leading-[36px] tracking-[-1px] text-[#d2d8dc]">Census 2010 Visualization</h1>
          <div className="-mr-px flex h-[30px] -translate-x-0.5 items-center text-white">
            <PlotlyMark className="h-[30px] w-[30px]" />
            <svg viewBox="0 0 227 40" className="h-10 w-[227px]">
              <text x="7" y="26.5" fontFamily="'Open Sans', sans-serif" fontWeight="600" fontSize="21.5" textLength="61" lengthAdjust="spacingAndGlyphs" fill="#fff">plotly</text>
              <rect x="75" y="9" width="1.3" height="21" fill="#fff" />
              <text x="83" y="26.5" fontFamily="'Open Sans', sans-serif" fontSize="17.5" textLength="39" lengthAdjust="spacingAndGlyphs" fill="#fff">Dash</text>
              <text x="138.500" y="29" fontFamily="Roboto, sans-serif" fontWeight="500" fontSize="24.5" textLength="88" fill="#7400ff">RAPIDS</text>
            </svg>
          </div>
        </header>

        <div className="flex gap-[47px]">
          <Card className="h-[150px] w-[1149px]">
            <CardHeader title="Population Count" />
            <div className="pt-2.5 text-center text-[48px] leading-[54px] text-[#d2d8dc]">308,745,309</div>
          </Card>
          <Card className="h-[150px] w-[1149px]">
            <CardHeader title="Options" button="Clear All Selections" />
            <div className="flex items-center pt-7 pl-[154px]">
              <span className="w-[175px]">GPU Acceleration</span>
              <span className="flex h-[29px] w-[49px] items-center justify-end rounded-full border border-[#0c0f0e] bg-linear-to-r from-[#2fb592] to-[#176a57] shadow-[inset_0_0_8px_#0b4a3b]">
                <span className="h-[25px] w-[23px] rounded-full border border-[#2b2b2b] bg-linear-to-br from-[#6a6a6a] to-[#3a3a3a]" />
              </span>
              <span className="ml-[131px] w-[76px]">Color by</span>
              <span className="flex h-9 w-[530px] items-center justify-between rounded-[4px] border border-[#ccc] bg-white pr-[10px] pb-px pl-[9px] text-[#333]">
                Total Count by Viridis Color Scale
                <span className="mt-0.5 border-x-[5px] border-t-[5px] border-x-transparent border-t-[#999]" />
              </span>
            </div>
          </Card>
        </div>

        <Card className="mt-6 h-[580px] w-[2345px]">
          <CardHeader title="Population Distribution of Individuals" button="Clear Selection" />
          <div className="flex h-[524px]">
            <div className="-mt-px ml-6"><DensityMap /></div>
            <div className="w-[167px]">
              <div className="flex h-[26px] w-[167px] items-center pt-[5px]">
                <BarIcon d={CAMERA} className="-ml-[7px] text-[#626463]" />
                <BarIcon d={PAN} className="ml-4 text-[#c4c6c5]" />
                <BarIcon d={SELECT} className="ml-2 text-[#626463]" />
                <BarIcon d={HOME} box="0 0 928 1000" className="ml-4 text-[#626463]" />
                <PlotlyMark className="ml-4 h-4 w-4" />
              </div>
              <ColorBar />
            </div>
          </div>
        </Card>

        <div className="mt-[23px] flex gap-[47px]">
          <ChartCard title="Education Distribution" chart={EDUCATION} />
          <ChartCard title="Income Distribution" chart={INCOME} />
        </div>
        <div className="mt-6 flex gap-[47px]">
          <ChartCard title="Class of Workers Distribution" chart={WORKERS} />
          <ChartCard title="Age Distribution" chart={AGE} />
        </div>

        <Card className="mt-6 h-[216px] w-[2345px] pt-3 pl-[10px]">
          <h2 className="text-2xl leading-[28px] tracking-[-0.8px] text-[#d2d8dc]">Acknowledgements and Data Sources</h2>
          <ul className="pt-[14px]">
            {NOTES.map((n, i) => (
              <li key={i} className="flex h-6 items-center">
                <span className="mr-[7px] h-[6px] w-[6px] rounded-full border border-[#c9d1d5]" />
                <span className="whitespace-pre">{n}</span>
              </li>
            ))}
          </ul>
        </Card>
      </div>
    </div>
  );
}
